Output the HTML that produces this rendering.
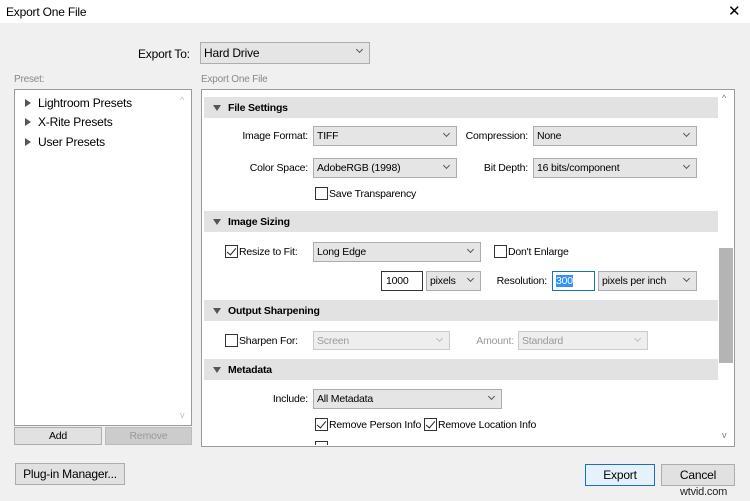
<!DOCTYPE html>
<html><head><style>
*{box-sizing:border-box;margin:0;padding:0}
body{width:750px;height:501px;background:#f0f0f0;font-family:"Liberation Sans",sans-serif;font-size:10.5px;letter-spacing:-0.2px;color:#000;position:relative;overflow:hidden}
.a{position:absolute;white-space:nowrap}
.dd{position:absolute;background:#e5e5e5;border:1px solid #adadad;padding:3px 3px;line-height:12px}
.dd:after{content:"";position:absolute;right:7px;top:4px;width:4px;height:4px;border-right:1px solid #555;border-bottom:1px solid #555;transform:rotate(45deg)}
.dis{color:#999;border-color:#ccc;background:#eee}
.dis:after{border-color:#bbb}
.hd{position:absolute;left:204px;width:514px;height:21px;background:#e2e2e2;font-weight:bold;padding:5px 0 0 24px;line-height:12px}
.hd:before{content:"";position:absolute;left:9px;top:8px;border-left:4px solid transparent;border-right:4px solid transparent;border-top:6px solid #555}
.cb{position:absolute;width:13px;height:13px;border:1px solid #333;background:#fff}
.ck:after{content:"";position:absolute;left:3px;top:0px;width:4px;height:8px;border-right:1.5px solid #222;border-bottom:1.5px solid #222;transform:rotate(40deg)}
.btn{position:absolute;background:#e1e1e1;border:1px solid #adadad;text-align:center;line-height:16px}
.tri{position:absolute;border-top:4px solid transparent;border-bottom:4px solid transparent;border-left:6px solid #555}
.r{text-align:right}
</style></head><body>
<div class="a" style="left:0;top:0;width:750px;height:23px;background:#fff"></div>
<div class="a" style="left:6px;top:5px;font-size:12px">Export One File</div>
<div class="a" style="left:728px;top:2px;font-size:15px">✕</div>

<div class="a" style="left:138px;top:47px;font-size:12px">Export To:</div>
<div class="dd" style="left:200px;top:42px;width:170px;height:22px;font-size:12px;padding-top:4px">Hard Drive</div>

<div class="a" style="left:14px;top:74px;color:#888;font-size:10px">Preset:</div>
<div class="a" style="left:201px;top:74px;color:#888;font-size:10px">Export One File</div>

<div class="a" style="left:14px;top:89px;width:178px;height:337px;background:#fff;border:1px solid #9a9a9a"></div>
<div class="a" style="left:180px;top:95px;color:#bbb;font-size:9px">^</div>
<div class="a" style="left:180px;top:410px;color:#bbb;font-size:9px">v</div>
<div class="tri" style="left:25px;top:99px"></div><div class="a" style="left:38px;top:96px;font-size:12px">Lightroom Presets</div>
<div class="tri" style="left:25px;top:118px"></div><div class="a" style="left:38px;top:115px;font-size:12px">X-Rite Presets</div>
<div class="tri" style="left:25px;top:138px"></div><div class="a" style="left:38px;top:135px;font-size:12px">User Presets</div>

<div class="btn" style="left:14px;top:427px;width:88px;height:18px">Add</div>
<div class="btn" style="left:105px;top:427px;width:87px;height:18px;color:#999;background:#ccc;border-color:#bbb">Remove</div>
<div class="btn" style="left:15px;top:463px;width:110px;height:22px;line-height:20px;font-size:12px">Plug-in Manager...</div>

<div class="a" style="left:201px;top:89px;width:534px;height:358px;background:#fff;border:1px solid #9a9a9a"></div>
<div class="a" style="left:719px;top:248px;width:14px;height:115px;background:#b4b4b4"></div>
<div class="a" style="left:722px;top:93px;color:#777;font-size:9px">^</div>
<div class="a" style="left:722px;top:430px;color:#777;font-size:9px">v</div>

<div class="hd" style="top:97px">File Settings</div>
<div class="a r" style="left:210px;top:130px;width:98px">Image Format:</div>
<div class="dd" style="left:313px;top:126px;width:144px;height:20px">TIFF</div>
<div class="a r" style="left:440px;top:130px;width:88px">Compression:</div>
<div class="dd" style="left:533px;top:126px;width:164px;height:20px">None</div>
<div class="a r" style="left:210px;top:162px;width:98px">Color Space:</div>
<div class="dd" style="left:313px;top:158px;width:144px;height:20px">AdobeRGB (1998)</div>
<div class="a r" style="left:440px;top:162px;width:88px">Bit Depth:</div>
<div class="dd" style="left:533px;top:158px;width:164px;height:20px">16 bits/component</div>
<div class="cb" style="left:315px;top:187px"></div><div class="a" style="left:329px;top:188px">Save Transparency</div>

<div class="hd" style="top:211px">Image Sizing</div>
<div class="cb ck" style="left:225px;top:245px"></div><div class="a" style="left:239px;top:246px">Resize to Fit:</div>
<div class="dd" style="left:313px;top:242px;width:168px;height:20px">Long Edge</div>
<div class="cb" style="left:494px;top:245px"></div><div class="a" style="left:508px;top:246px">Don't Enlarge</div>
<div class="a" style="left:381px;top:271px;width:42px;height:20px;border:1px solid #333;background:#fff;padding:3px 4px">1000</div>
<div class="dd" style="left:426px;top:271px;width:55px;height:20px">pixels</div>
<div class="a r" style="left:480px;top:275px;width:67px">Resolution:</div>
<div class="a" style="left:552px;top:271px;width:43px;height:20px;border:1px solid #1a6fc4;background:#fff;padding:3px 3px"><span style="background:#3390ff;color:#fff">300</span></div>
<div class="dd" style="left:598px;top:271px;width:99px;height:20px">pixels per inch</div>

<div class="hd" style="top:300px">Output Sharpening</div>
<div class="cb" style="left:225px;top:334px"></div><div class="a" style="left:239px;top:335px">Sharpen For:</div>
<div class="dd dis" style="left:313px;top:331px;width:137px;height:19px">Screen</div>
<div class="a r" style="left:460px;top:335px;width:54px;color:#999">Amount:</div>
<div class="dd dis" style="left:518px;top:331px;width:130px;height:19px">Standard</div>

<div class="hd" style="top:359px">Metadata</div>
<div class="a r" style="left:210px;top:393px;width:98px">Include:</div>
<div class="dd" style="left:313px;top:389px;width:189px;height:20px">All Metadata</div>
<div class="cb ck" style="left:315px;top:418px"></div><div class="a" style="left:329px;top:419px">Remove Person Info</div>
<div class="cb ck" style="left:424px;top:418px"></div><div class="a" style="left:438px;top:419px">Remove Location Info</div>
<div class="a" style="left:315px;top:441px;width:13px;height:4px;border:1px solid #333;border-bottom:none"></div>

<div class="btn" style="left:585px;top:464px;width:70px;height:22px;line-height:20px;font-size:12px;border:1px solid #1a6fc4;background:#e5f1fb">Export</div>
<div class="btn" style="left:661px;top:464px;width:74px;height:22px;line-height:20px;font-size:12px">Cancel</div>
<div class="a" style="left:680px;top:486px;font-size:11px;color:#222">wtvid.com</div>
</body></html>
